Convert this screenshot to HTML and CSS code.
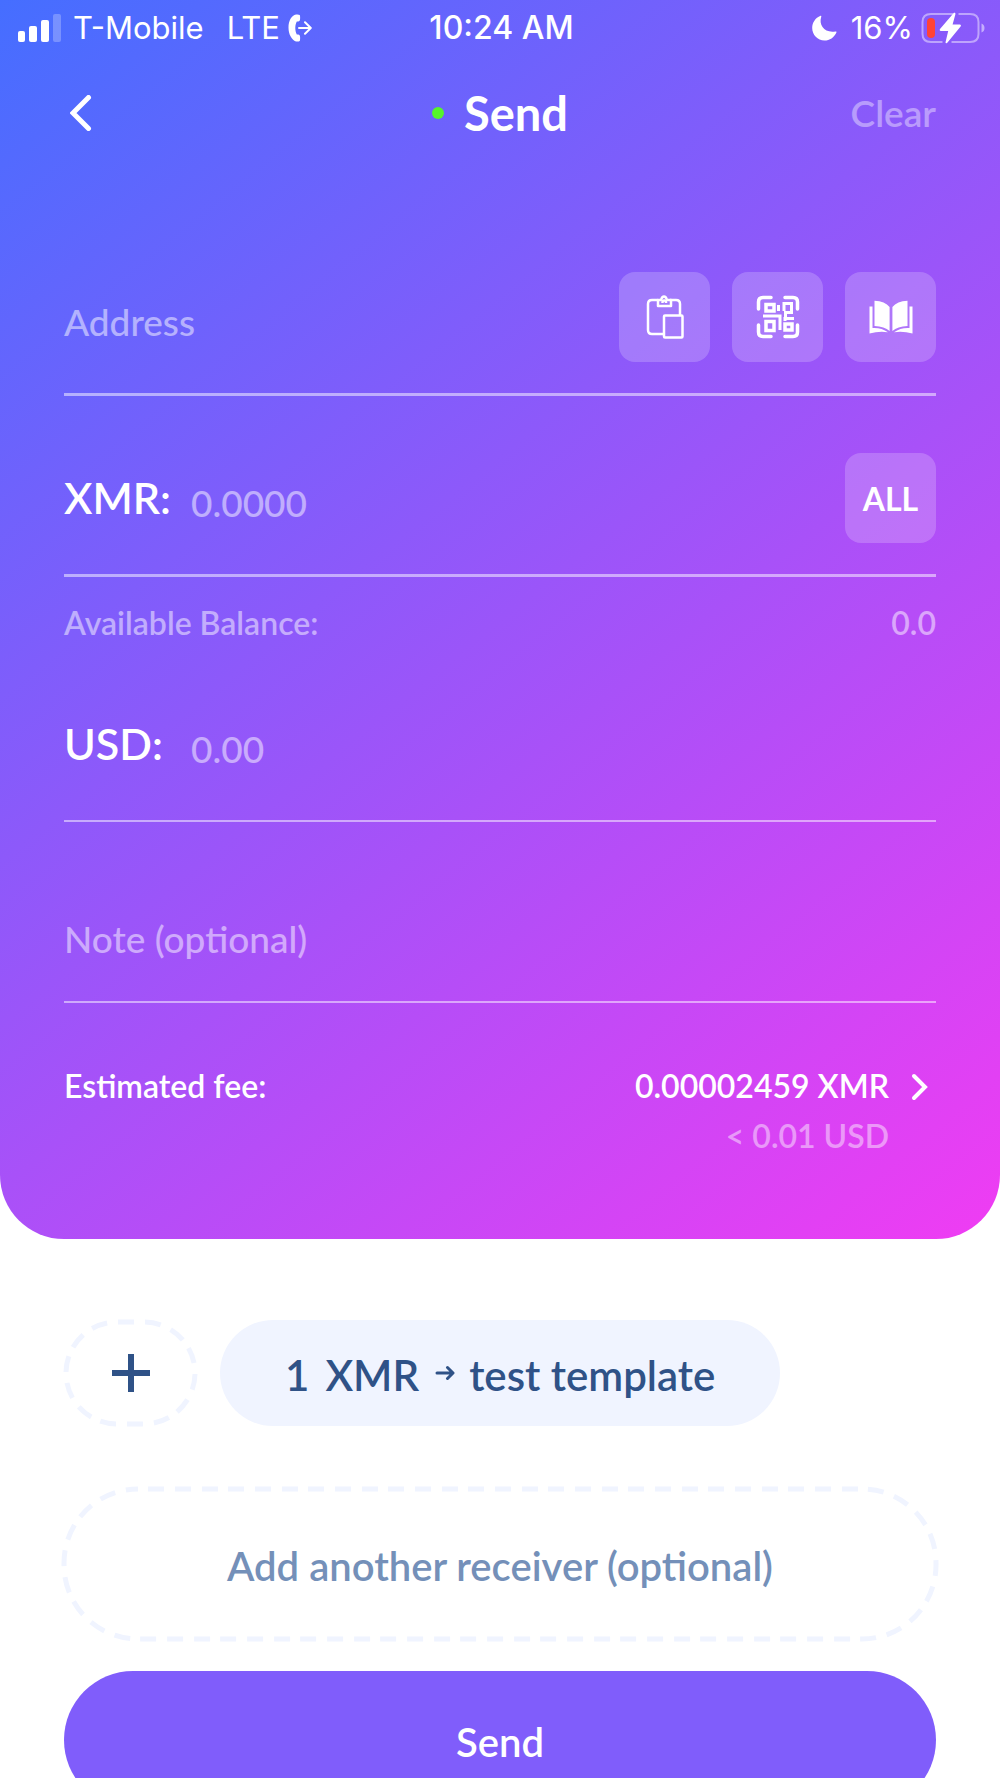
FILE: index.html
```html
<!DOCTYPE html>
<html lang="en">
<head>
<meta charset="utf-8">
<meta name="viewport" content="width=device-width, initial-scale=1">
<title>Send</title>
<link rel="stylesheet" href="styles.css">
</head>
<body>
<form class="app">
  <section class="panel">
    <div class="status">
      <div class="status-side">
        <svg class="signal" width="44" height="30" viewBox="0 0 44 30" fill="#fff" aria-hidden="true"><rect x="0" y="18" width="7" height="11" rx="2"/><rect x="11" y="13" width="8" height="16" rx="2"/><rect x="23" y="7" width="8" height="22" rx="2"/><rect x="35" y="1" width="8" height="28" rx="2" opacity=".25"/></svg>
        <span class="carrier">T-Mobile</span>
        <span class="network">LTE</span>
        <svg width="24" height="28" viewBox="0 0 24 28" aria-hidden="true"><path d="M8 .6C3.500 1.500.5 7 .5 13.500S3.500 26 8 27.400c1.600.3 3 .1 3.700-.5.500-.5.600-3.500.2-5.200-.4-1.100-1.500-1.400-3.100-1.300C7.800 18.500 7.300 16.500 7.300 14s.5-4.500 1.500-6.400c1.600.1 2.700-.2 3.100-1.300.4-1.700.3-4.700-.2-5.200C11 .5 9.600.3 8 .6z" fill="#fff"/><path d="M11 14H22.500M17 8.300l5.800 5.700-5.800 5.700" fill="none" stroke="#fff" stroke-width="2" stroke-linecap="round" stroke-linejoin="round"/></svg>
      </div>
      <time class="clock">10:24 AM</time>
      <div class="status-side status-end">
        <svg width="25" height="26" viewBox="0 0 25 26" aria-hidden="true"><path d="M8.500.8c.6-.3 1 .1.800.8C6.300 10.500 13 18.500 23.600 16.400c.7-.1 1.100.4.800 1C22.200 22.300 17.600 25.500 12.500 25.500 5.600 25.500.2 20 .2 13.100.2 7.600 3.400 2.900 8.500.8z" fill="#fff"/></svg>
        <span class="percent">16%</span>
        <svg class="battery" width="64" height="32" viewBox="0 0 64 32" aria-hidden="true"><path d="M32.500 2H10Q1.500 2 1.500 10V22Q1.500 30 10 30H21.500M30.500 30H49Q57.500 30 57.500 22V10Q57.500 2 49 2H37.500" fill="none" stroke="#fff" stroke-opacity=".45" stroke-width="2"/><path d="M60.500 11.500q3 1 3 4.500t-3 4.500z" fill="#fff" fill-opacity=".5"/><rect x="6" y="6" width="8" height="20" rx="4" fill="#ff4336"/><path d="M32.500 1.200c.8-.8 2.200-.2 1.900 1L31.600 12.500h7.200c1 0 1.500 1 .8 1.900L26.300 30.800c-.8.9-2 .2-1.700-.9l2.600-11h-7.400c-1.100 0-1.500-1-.8-1.900z" fill="#fff"/></svg>
      </div>
    </div>

    <header class="header">
      <button class="back" type="button" aria-label="Back"><svg width="22" height="36" viewBox="0 0 22 36" aria-hidden="true"><path d="M18.500 2.500L3 18l15.500 15.500" fill="none" stroke="#fff" stroke-width="5" stroke-linecap="round" stroke-linejoin="miter"/></svg></button>
      <h1 class="title"><span class="dot"></span>Send</h1>
      <button class="clear" type="reset">Clear</button>
    </header>

    <div class="fields">
      <div class="field">
        <input class="input" type="text" placeholder="Address" aria-label="Address">
        <div class="tools">
          <button class="tile" type="button" aria-label="Paste"><svg width="38" height="44" viewBox="0 0 38 44" fill="none" stroke="#fff" stroke-width="2.500" stroke-linejoin="round" aria-hidden="true"><path d="M17 39H6Q2 39 2 35V9Q2 5 6 5H12M24 5H30Q34 5 34 9V20"/><path d="M12 5H15Q16 1.500 18 1.500T21 5H25V11H12Z"/><path d="M16.500 8V7q0-1.500 1.700-1.500T20 7V8"/><rect x="18" y="20.500" width="18.500" height="22" rx="1"/></svg></button>
          <button class="tile" type="button" aria-label="Scan QR code"><svg width="44" height="44" viewBox="0 0 44 44" fill="none" stroke="#fff" stroke-width="3.500" aria-hidden="true"><g stroke-linecap="round"><path d="M2.500 14V7Q2.500 2.500 7 2.500H15M29 2.500H37Q41.500 2.500 41.500 7V14M41.500 30V37Q41.500 41.500 37 41.500H29M15 41.500H7Q2.500 41.500 2.500 37V30"/></g><rect x="10" y="9.500" width="8" height="6.500"/><rect x="10" y="26.500" width="8" height="9"/><rect x="29" y="29" width="7" height="6"/><path d="M7 21H24V35M22.500 10V16M28 16V8.500H35.500V17.500H29.500V23.500H38M29 22V26" stroke-width="3"/></svg></button>
          <button class="tile" type="button" aria-label="Address book"><svg width="44" height="34" viewBox="0 0 44 34" fill="#fff" aria-hidden="true"><path d="M5.500.7Q16 1 20.600 7V31Q15.500 26.500 5.500 26z"/><path d="M38.500.7Q28 1 23.400 7V31Q28.500 26.500 38.500 26z"/><path d="M.5 6.500h3V28q9-.5 15.500 4.300Q10 31 .5 33.500zM43.500 6.500h-3V28q-9-.5-15.500 4.300Q34 31 43.500 33.500z"/></svg></button>
        </div>
      </div>
      <div class="field field-xmr">
        <label class="currency" for="xmr">XMR:</label>
        <input class="input" id="xmr" type="text" inputmode="decimal" placeholder="0.0000">
        <button class="tile" type="button">ALL</button>
      </div>
      <p class="balance"><span>Available Balance:</span><span>0.0</span></p>
      <div class="field field-thin field-usd">
        <label class="currency" for="usd">USD:</label>
        <input class="input" id="usd" type="text" inputmode="decimal" placeholder="0.00">
      </div>
      <div class="field field-thin field-note">
        <input class="input" type="text" placeholder="Note (optional)" aria-label="Note (optional)">
      </div>
      <button class="fee" type="button">
        <span class="fee-label">Estimated fee:</span>
        <span class="fee-values"><span>0.00002459 XMR</span><span class="fee-fiat">&lt; 0.01 USD</span></span>
        <svg class="fee-arrow" width="18" height="28" viewBox="0 0 18 28" aria-hidden="true"><path d="M3 3l11 11L3 25" fill="none" stroke="#fff" stroke-width="4" stroke-linecap="round" stroke-linejoin="miter"/></svg>
      </button>
    </div>
  </section>

  <section class="actions">
    <div class="templates">
      <button class="add" type="button" aria-label="New template">
        <svg class="dashes" aria-hidden="true"><rect width="100%" height="100%" rx="51" stroke-dashoffset="-1"/></svg>
        <svg width="38" height="38" viewBox="0 0 38 38" aria-hidden="true"><path d="M19 0V38M0 19H38" stroke="#2f5287" stroke-width="6"/></svg>
      </button>
      <button class="chip" type="button"><span class="chip-amount">1</span><span>XMR</span><svg class="chip-arrow" width="20" height="16" viewBox="0 0 20 16" fill="none" stroke="#2f5287" stroke-width="3" stroke-linecap="round" stroke-linejoin="round" aria-hidden="true"><path d="M2 8H17M12.500 2.500L18 8l-5.500 5.500"/></svg><span>test template</span></button>
    </div>
    <button class="receiver" type="button">
      <svg class="dashes" aria-hidden="true"><rect width="100%" height="100%" rx="74" stroke-dashoffset="-10"/></svg>
      Add another receiver (optional)
    </button>
    <button class="send" type="submit">Send</button>
  </section>
</form>
</body>
</html>
```
FILE: styles.css
```css
* { box-sizing: border-box; }

body {
  margin: 0;
  background: #fff;
  font-family: Lato, "Liberation Sans", sans-serif;
  color: #fff;
}

button, input {
  margin: 0;
  padding: 0;
  border: 0;
  background: none;
  color: inherit;
  font: inherit;
}

button { cursor: pointer; }
svg { display: block; flex: none; }

.app {
  height: 100vh;
  overflow: hidden auto;
  scrollbar-width: none;
}

.panel {
  padding-bottom: 78px;
  border-radius: 0 0 64px 64px;
  background: linear-gradient(141deg, #456eff, #f03cf3);
}

/* status bar */
.status {
  display: grid;
  grid-template-columns: 1fr auto 1fr;
  align-items: center;
  height: 56px;
  padding: 0 15px 0 18px;
  font-family: Inter, "Liberation Sans", sans-serif;
  font-size: 31px;
  line-height: 40px;
}
.status-side { display: flex; align-items: center; }
.status-end { justify-content: flex-end; }
.signal { margin-right: 11px; }
.network { margin: 0 8px 0 23px; }
.clock { font-size: 32px; font-weight: 500; }
.percent { margin: 0 8px 0 14px; }

/* title bar */
.header {
  display: grid;
  grid-template-columns: 1fr auto 1fr;
  align-items: center;
  height: 114px;
  padding: 0 64px;
}
.back { justify-self: start; padding: 0 6px; }
.title {
  display: flex;
  align-items: center;
  gap: 20px;
  margin: 0;
  font-size: 47px;
  line-height: 56px;
  font-weight: 700;
}
.dot {
  width: 12px;
  height: 12px;
  border-radius: 50%;
  background: #55f52b;
}
.clear {
  justify-self: end;
  font-size: 37px;
  line-height: 48px;
  font-weight: 600;
  opacity: .4;
}

/* fields */
.fields { padding: 102px 64px 0; }
.field {
  display: flex;
  align-items: center;
  padding-bottom: 31px;
  border-bottom: 3px solid rgba(255, 255, 255, .5);
}
.field-thin { border-bottom-width: 2px; }
.field-xmr { margin-top: 57px; }
.field-usd { margin-top: 52px; }
.field-note { margin-top: 84px; }
.input {
  flex: 1;
  min-width: 0;
  height: 90px;
  padding-top: 8px;
  font-size: 37px;
  font-weight: 500;
  outline: 0;
}
.field-note .input { height: 64px; padding: 0; }
.input::placeholder { color: #fff; opacity: .5; }
.currency {
  width: 127px;
  font-size: 43px;
  line-height: 56px;
  font-weight: 600;
}
.tools { display: flex; gap: 22px; }
.tile {
  display: flex;
  align-items: center;
  justify-content: center;
  width: 91px;
  height: 90px;
  border-radius: 16px;
  background: rgba(255, 255, 255, .2);
  font-size: 32px;
  font-weight: 700;
}
.balance {
  display: flex;
  justify-content: space-between;
  margin: 22px 0 0;
  font-size: 32px;
  line-height: 48px;
  font-weight: 600;
  color: rgba(255, 255, 255, .5);
}
.fee {
  display: flex;
  align-items: flex-start;
  width: 100%;
  margin-top: 58px;
  padding-right: 7px;
  font-size: 32px;
  line-height: 50px;
  font-weight: 600;
}
.fee-label { flex: 1; text-align: left; }
.fee-values { display: flex; flex-direction: column; text-align: right; }
.fee-fiat { opacity: .45; }
.fee-arrow { margin: 12px 0 0 22px; }

/* templates and actions */
.actions {
  display: flex;
  flex-direction: column;
  padding: 81px 64px 32px;
}
.templates { display: flex; gap: 23px; }
.add, .receiver {
  position: relative;
  display: flex;
  align-items: center;
  justify-content: center;
}
.add {
  width: 129px;
  height: 102px;
  margin: 2px;
}
.dashes {
  position: absolute;
  inset: 0;
  width: 100%;
  height: 100%;
  overflow: visible;
  fill: none;
  stroke: #f0f4ff;
  stroke-width: 5px;
  stroke-dasharray: 16 11 16 11 16 10;
}
.chip {
  display: flex;
  align-items: center;
  height: 106px;
  padding: 3px 65px 0;
  border-radius: 53px;
  background: #f0f4ff;
  color: #2f5287;
  font-size: 42px;
  font-weight: 600;
}
.chip-amount { margin-right: 16px; }
.chip-arrow { margin: 0 14px 4px 16px; }
.receiver {
  height: 150px;
  margin-top: 63px;
  padding-top: 3px;
  color: #7490b9;
  font-size: 40px;
  font-weight: 600;
}
.send {
  height: 138px;
  flex: none;
  margin-top: 32px;
  padding-top: 3px;
  border-radius: 69px;
  background: #805dfb;
  font-size: 40px;
  font-weight: 600;
}
```
